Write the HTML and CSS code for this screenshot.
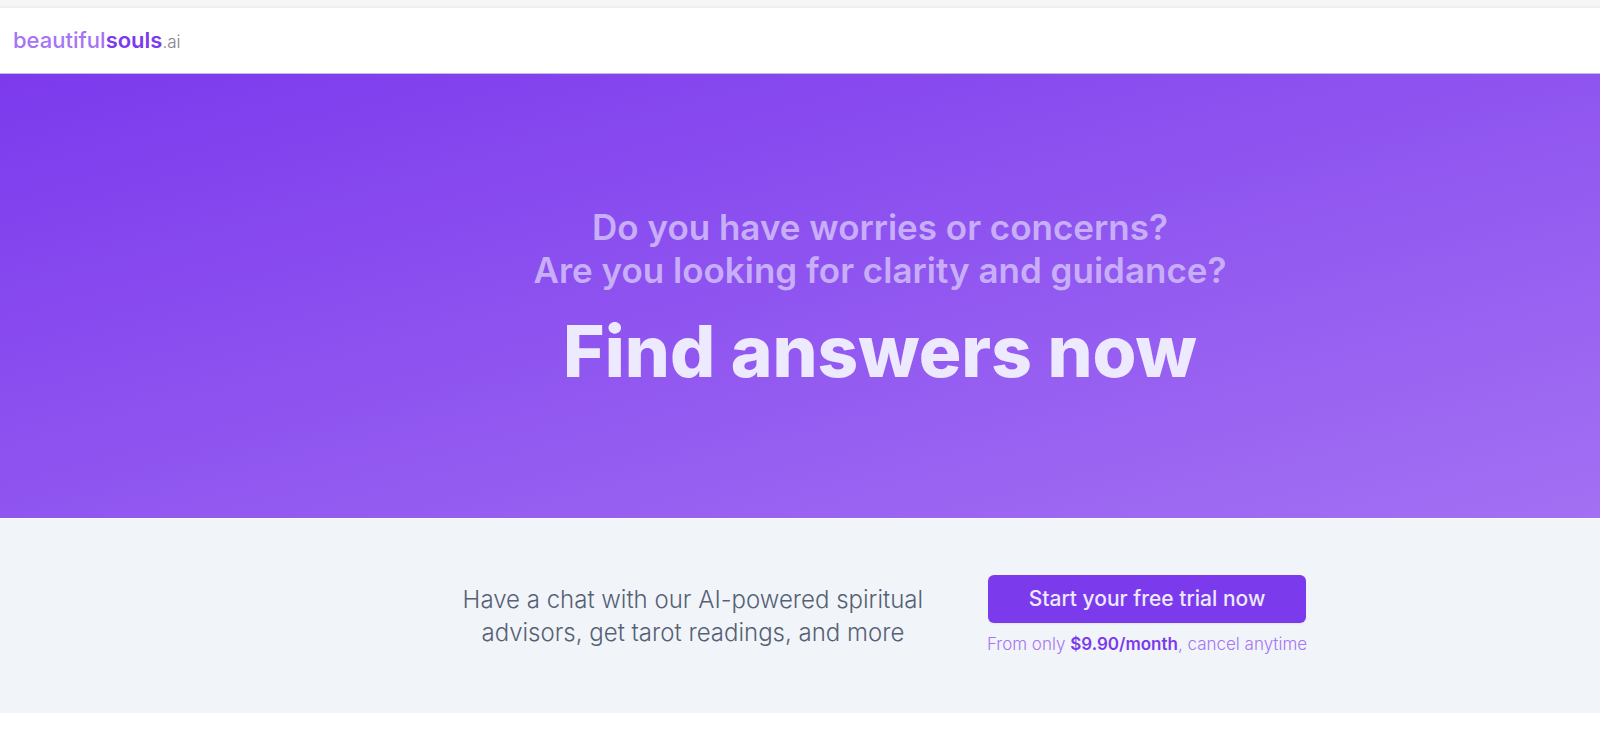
FILE: index.html
```html
<!DOCTYPE html>
<html lang="en">
<head>
<meta charset="utf-8">
<title>beautifulsouls.ai</title>
<link rel="stylesheet" href="styles.css">
</head>
<body>
<div class="topbar"></div>
<header class="header"><a class="brand" href="#">beautiful<strong>souls</strong><span>.ai</span></a></header>
<main>
<section class="hero">
<p class="lead">Do you have worries or concerns?<br>Are you looking for clarity and guidance?</p>
<h1 class="title">Find answers now</h1>
</section>
<section class="offer">
<p class="pitch">Have a chat with our AI-powered spiritual advisors, get tarot readings, and more</p>
<div class="action">
<button class="cta" type="button">Start your free trial now</button>
<p class="price">From only <strong>$9.90/month</strong>, cancel anytime</p>
</div>
</section>
</main>
</body>
</html>
```
FILE: styles.css
```css
* { box-sizing: border-box; }
body { margin: 0; background: #fff; font-family: Inter, "Liberation Sans", sans-serif; }
p, h1 { margin: 0; }
.topbar { height: 8px; background: #f6f6f6; border-bottom: 2px solid #f0f0f0; }
.header { height: 66px; padding: 0 13px; display: flex; align-items: center; border-bottom: 1px solid #c4bcd8; }
.brand { color: #a674f5; font-size: 22px; line-height: 32px; font-weight: 500; text-decoration: none; }
.brand strong { color: #7c3aed; font-weight: 600; }
.brand span { color: #808088; font-size: 17px; font-weight: 300; }
.hero { padding: 132px 0 127px 160px; text-align: center; background: linear-gradient(165deg, #7c3aed, #a370f3); border-bottom: 1px solid #fff; }
.lead { color: #c8aef9; font-size: 35px; line-height: 43px; font-weight: 600; }
.title { margin-top: 20px; color: #ede9fe; font-size: 71px; line-height: 79px; font-weight: 800; }
.offer { padding: 56px 0 56px 168px; display: flex; justify-content: center; gap: 62px; background: #f1f5f9; }
.pitch { width: 464px; padding-top: 8px; color: #566176; font-size: 24px; line-height: 33px; font-weight: 300; text-align: center; }
.action { display: flex; flex-direction: column; align-items: center; }
.cta { width: 318px; height: 48px; border: 0; border-radius: 6px; background: #7c3aed; color: #ede9fe; font: 500 21px/32px Inter, sans-serif; box-shadow: 0 1px 2px #0001; }
.price { margin-top: 8px; color: #a674f5; font-size: 17px; line-height: 26px; font-weight: 300; }
.price strong { color: #7c3aed; font-weight: 600; }
```
